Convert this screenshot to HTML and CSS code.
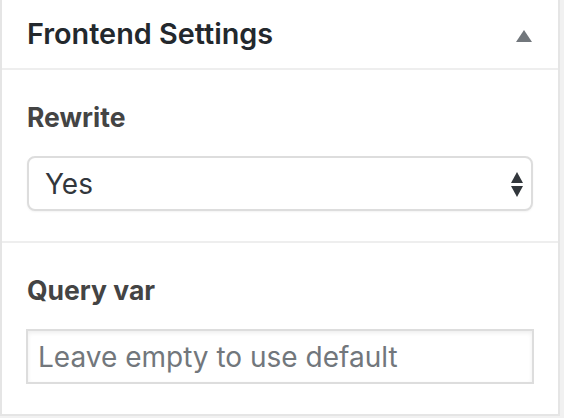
FILE: index.html
```html
<!DOCTYPE html>
<html>
<head>
<meta charset="utf-8">
<link rel="stylesheet" href="styles.css">
</head>
<body>
<div class="panel">
  <div class="panel-header">
    <h2 class="panel-title">Frontend Settings</h2>
    <svg class="toggle" width="16" height="12" viewBox="0 0 16 12"><polygon points="8,0 16,12 0,12" fill="#72777c"/></svg>
  </div>
  <div class="section">
    <label class="field-label">Rewrite</label>
    <div class="select-wrap">
      <select class="select"><option>Yes</option><option>No</option></select>
      <svg class="select-arrows" width="12" height="25" viewBox="0 0 12 25"><polygon points="6,0 12,11 0,11" fill="#32373c"/><polygon points="0,14 12,14 6,25" fill="#32373c"/></svg>
    </div>
  </div>
  <div class="section">
    <label class="field-label">Query var</label>
    <input class="text-input" type="text" placeholder="Leave empty to use default">
  </div>
</div>
</body>
</html>
```

FILE: styles.css
```css
html, body {
  margin: 0;
  padding: 0;
  background: #f1f1f1;
}
body {
  font-family: Inter, Roboto, "Liberation Sans", sans-serif;
  width: 564px;
  height: 418px;
  overflow: hidden;
}
.panel {
  width: 560px;
  box-sizing: border-box;
  background: #fff;
  border: 2px solid #e5e5e5;
  border-top: none;
}
.panel-header {
  height: 68px;
  display: flex;
  align-items: center;
  justify-content: space-between;
  padding: 0 26px 0 25px;
  border-bottom: 2px solid #eee;
}
.panel-title {
  margin: 0;
  font-size: 28.8px;
  font-weight: 600;
  color: #23282d;
  line-height: 1;
  padding-top: 1px;
}
.toggle {
  display: block;
  margin-top: 4px;
}
.section {
  display: flex;
  flex-direction: column;
  padding: 30px 25px 30px 25px;
  border-bottom: 2px solid #eee;
}
.section:last-child {
  border-bottom: none;
}
.field-label {
  font-size: 26.5px;
  font-weight: 700;
  color: #444;
  line-height: 34px;
  margin-bottom: 22px;
}
.select-wrap {
  position: relative;
  width: 506px;
}
.select {
  appearance: none;
  -webkit-appearance: none;
  width: 506px;
  height: 55px;
  box-sizing: border-box;
  border: 2px solid #ddd;
  border-radius: 8px;
  background: #fff;
  box-shadow: 0 1px 2px rgba(0,0,0,0.05);
  font-family: Inter, Roboto, "Liberation Sans", sans-serif;
  font-size: 28px;
  color: #32373c;
  padding: 0 0 0 16px;
  margin: 0;
  outline: none;
}
.select-arrows {
  position: absolute;
  right: 10px;
  top: 16px;
  pointer-events: none;
}
.text-input {
  width: 508px;
  height: 55px;
  box-sizing: border-box;
  border: 2px solid #ddd;
  border-radius: 0;
  box-shadow: inset 0 2px 4px rgba(0,0,0,0.07);
  font-family: Inter, Roboto, "Liberation Sans", sans-serif;
  font-size: 28px;
  color: #32373c;
  padding: 0 10px;
  margin: 0 0 0 -1px;
  outline: none;
}
.text-input::placeholder {
  color: #72777c;
  opacity: 1;
}
```
